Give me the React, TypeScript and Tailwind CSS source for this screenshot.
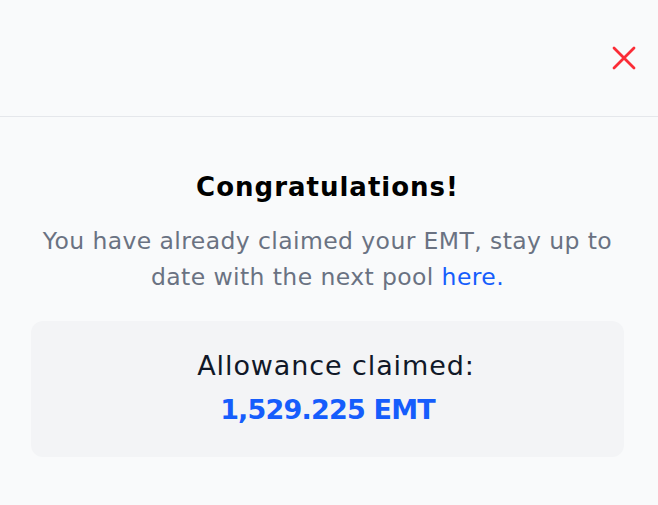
export default function App() {
  return (
    <div
      className="min-h-screen w-full bg-gray-50"
      style={{ fontFamily: '"DejaVu Sans", "Noto Sans", sans-serif' }}
    >
      <header className="flex h-[117px] items-center justify-end border-b border-gray-200 pr-[22px]">
        <button aria-label="Close" className="text-red-500">
          <svg width="24" height="24" viewBox="0 0 24 24" fill="none" stroke="currentColor" strokeWidth="2.8" strokeLinecap="round">
            <path d="M2 2L22 22M22 2L2 22" />
          </svg>
        </button>
      </header>

      <div className="pl-[31px] pr-[34px] pt-[54px] text-center">
        <h2 className="text-[26px] leading-8 font-bold tracking-[1px] text-black">Congratulations!</h2>
        <p className="mt-5 text-[23.5px] leading-9 tracking-[0.4px] text-gray-500">
          You have already claimed your EMT, stay up to
          <br />
          date with the next pool <a className="text-blue-600">here.</a>
        </p>

        <div className="mt-[26px] rounded-xl bg-gray-100 pt-[23px] pb-[25px]">
          <p className="pl-[17px] text-[27px] leading-[44px] tracking-[0.9px] text-gray-900">Allowance claimed:</p>
          <p className="text-[27px] leading-[44px] font-bold tracking-[-0.8px] text-blue-600">1,529.225 EMT</p>
        </div>
      </div>
    </div>
  );
}
